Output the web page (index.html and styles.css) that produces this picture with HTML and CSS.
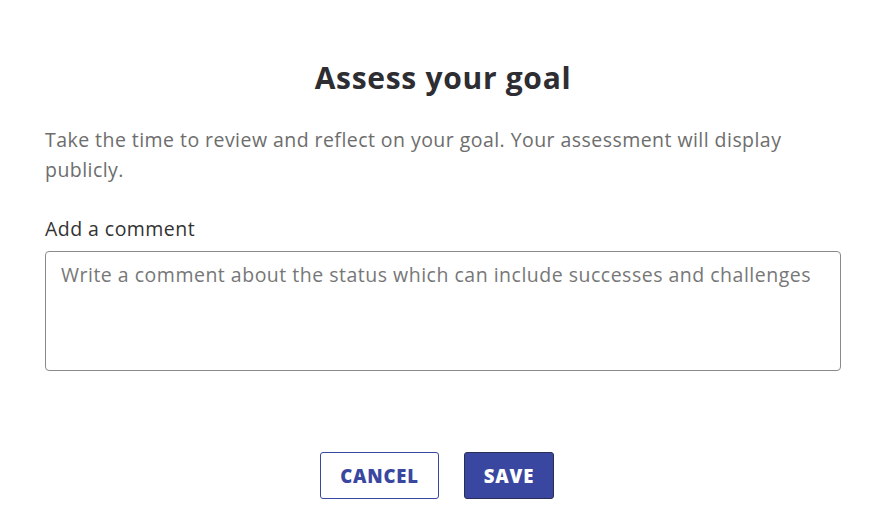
FILE: index.html
```html
<!DOCTYPE html>
<html lang="en">
<head>
    <meta charset="UTF-8">
    <meta name="viewport" content="width=device-width, initial-scale=1.0">
    <title>Assess your goal</title>
    <link rel="stylesheet" href="styles.css">
</head>
<body>
    <div class="modal">
        <h2 class="title">Assess your goal</h2>
        <p class="intro">Take the time to review and reflect on your goal. Your assessment will display publicly.</p>

        <label for="comment" class="field-label">Add a comment</label>
        <textarea id="comment" placeholder="Write a comment about the status which can include successes and challenges"></textarea>

        <div class="actions">
            <button class="btn btn-outline">CANCEL</button>
            <button class="btn btn-primary">SAVE</button>
        </div>
    </div>
</body>
</html>
```

FILE: styles.css
```css
body {
    font-family: "Open Sans", Lato, sans-serif;
    margin: 0;
    background-color: #fff;
}

.modal {
    padding: 58px 45px 0;
}

.title {
    margin: 0 0 27px;
    text-align: center;
    font-size: 30px;
    font-weight: 700;
    letter-spacing: 0.7px;
    color: #2d2d32;
    line-height: 40px;
}

.intro {
    margin: 0 0 31px;
    font-size: 19.5px;
    letter-spacing: 0.45px;
    line-height: 30px;
    color: #6d6d6d;
}

.field-label {
    display: block;
    margin-bottom: 9px;
    font-size: 19.5px;
    letter-spacing: 0.45px;
    line-height: 26px;
    color: #333;
}

textarea {
    display: block;
    width: 100%;
    height: 120px;
    padding: 10px 15px;
    box-sizing: border-box;
    border: 1px solid #8a8a8a;
    border-radius: 4px;
    font-family: inherit;
    font-size: 19.5px;
    letter-spacing: 0.5px;
    line-height: 26px;
    resize: none;
}

textarea::placeholder {
    color: #777;
}

.actions {
    display: flex;
    justify-content: center;
    gap: 25px;
    margin-top: 81px;
    padding-right: 12px;
}

.btn {
    height: 47px;
    padding: 0;
    border-radius: 3px;
    font-family: inherit;
    font-size: 18.5px;
    font-weight: 800;
    letter-spacing: 0.8px;
    cursor: pointer;
}

.btn-outline {
    width: 119px;
    background-color: #fff;
    color: #3a47a0;
    border: 1px solid #3a47a0;
}

.btn-primary {
    width: 90px;
    background-color: #3a47a0;
    color: #fff;
    border: 1px solid #2b2f55;
}
```
